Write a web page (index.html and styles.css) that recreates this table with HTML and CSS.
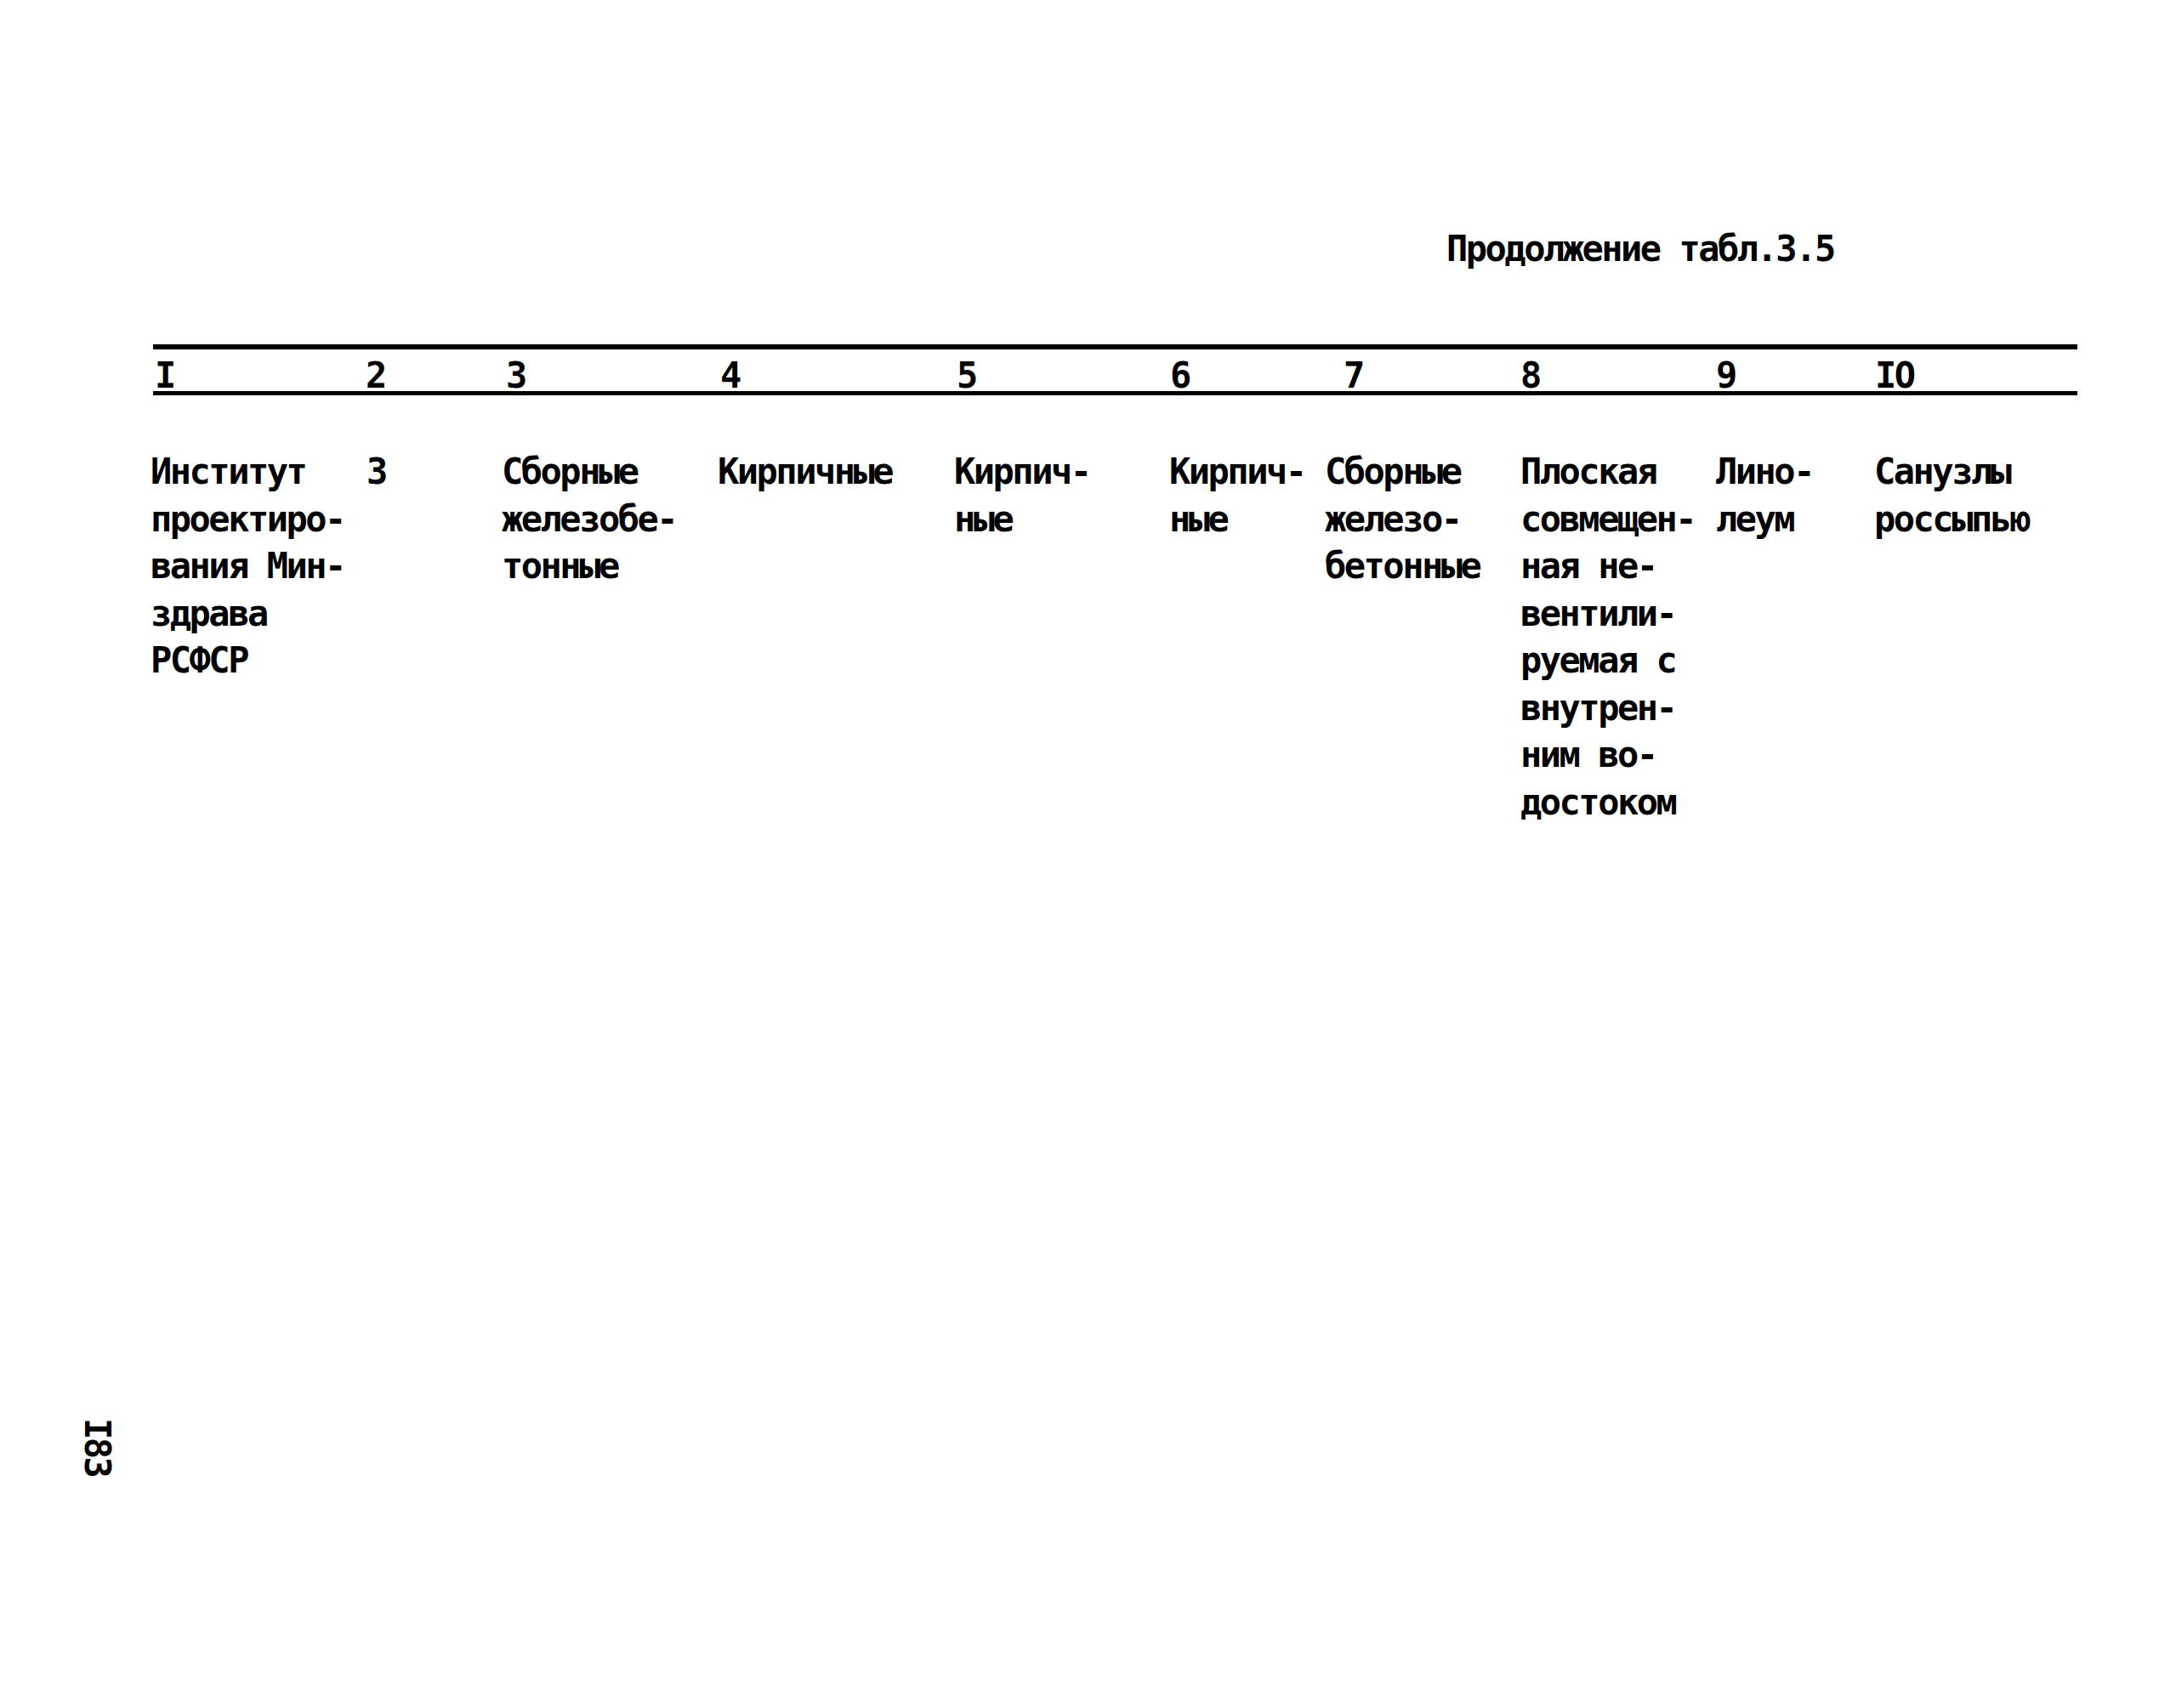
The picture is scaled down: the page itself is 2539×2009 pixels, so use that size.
FILE: index.html
```html
<!DOCTYPE html>
<html lang="ru">
<head>
<meta charset="utf-8">
<title>Продолжение табл.3.5</title>
<link rel="stylesheet" href="styles.css">
</head>
<body>
<div class="page">
  <aside class="margin"><span class="folio">I83</span></aside>
  <main class="sheet">
    <div class="caption">Продолжение табл.3.5</div>
    <div class="table">
      <div class="head">
        <div>I</div>
        <div>2</div>
        <div>3</div>
        <div>4</div>
        <div>5</div>
        <div>6</div>
        <div>7</div>
        <div>8</div>
        <div>9</div>
        <div>IO</div>
      </div>
      <div class="body">
        <div>Институт<br>проектиро-<br>вания Мин-<br>здрава<br>РСФСР</div>
        <div>3</div>
        <div>Сборные<br>железобе-<br>тонные</div>
        <div>Кирпичные</div>
        <div>Кирпич-<br>ные</div>
        <div>Кирпич-<br>ные</div>
        <div>Сборные<br>железо-<br>бетонные</div>
        <div>Плоская<br>совмещен-<br>ная не-<br>вентили-<br>руемая с<br>внутрен-<br>ним во-<br>достоком</div>
        <div>Лино-<br>леум</div>
        <div>Санузлы<br>россыпью</div>
      </div>
    </div>
  </main>
</div>
</body>
</html>
```

FILE: styles.css
```css
html, body {
  margin: 0;
  padding: 0;
  background: #ffffff;
}

body {
  color: #000000;
  font-family: "DejaVu Sans Mono", "Liberation Mono", monospace;
  font-size: 42px;
  font-weight: bold;
  letter-spacing: -2.5px;
}

.page {
  display: grid;
  grid-template-columns: 180px 2263px;
  min-height: 2009px;
}

.margin {
  padding-top: 1668px;
  padding-left: 93px;
}

.folio {
  display: block;
  writing-mode: vertical-rl;
  line-height: 42px;
  white-space: nowrap;
}

.sheet {
  padding-top: 272px;
}

.caption {
  line-height: 42px;
  margin-left: 1521px;
  white-space: nowrap;
}

.table {
  margin-top: 91px;
}

.head {
  display: grid;
  grid-template-columns: 248px 165px 252px 278px 251px 204px 208px 230px 187px 1fr;
  border-top: 6px solid #000;
  border-bottom: 5px solid #000;
  padding: 12px 0 0 2px;
  line-height: 37px;
  white-space: nowrap;
}

.body {
  display: grid;
  grid-template-columns: 254px 159px 254px 278px 253px 183px 230px 230px 186px 1fr;
  margin-top: 62px;
  margin-left: -3px;
  line-height: 55.5px;
  white-space: nowrap;
}
```
